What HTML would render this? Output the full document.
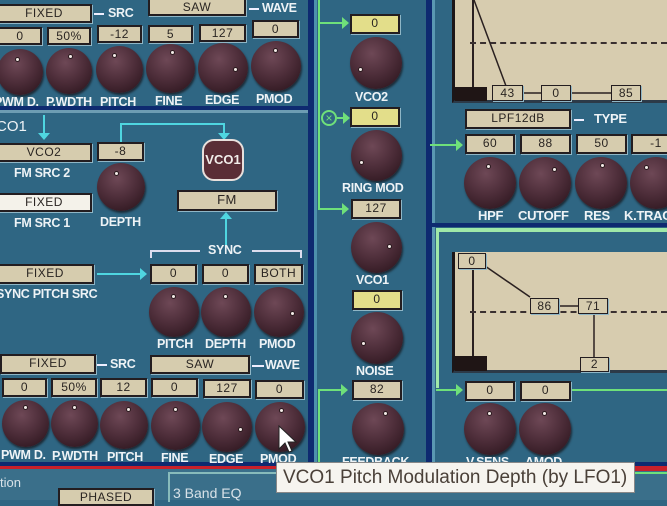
<!DOCTYPE html>
<html><head><meta charset="utf-8"><style>
*{margin:0;padding:0;box-sizing:border-box}
body{width:667px;height:500px;overflow:hidden;background:#2f6683;position:relative;font-family:"Liberation Sans",sans-serif}
div{position:absolute}
.b{background:#d6ccae;border:2px solid #231d20;box-shadow:1px 1px 0 #8fb6c6;color:#2a2522;font-size:12px;text-align:center;line-height:15px;letter-spacing:0.5px}
.y{background:#e3de8a}
.w{background:#f4f2ea}
.k{border-radius:50%;background:radial-gradient(circle at 42% 32%,#6e4856 0%,#4e2e3a 45%,#341b24 80%,#22121a 100%);box-shadow:1px 2px 2px #1c2a35}
.d{width:5px;height:5px;border-radius:50%;background:#f4ece8;border:1px solid #2a1a1e}
.l{color:#eef3f6;font-weight:bold;font-size:12.5px;white-space:nowrap;text-align:center;letter-spacing:-0.3px}
.g{background:#6fe07a}
.c{background:#4fd6e0}
.n{background:#0e2a70}
</style></head><body>
<div class="n" style="left:0;top:106px;width:314px;height:4px"></div>
<div style="left:0;top:110px;width:310px;height:3px;background:#6d9db3"></div>
<div class="n" style="left:308px;top:0;width:6px;height:466px"></div>
<div style="left:314px;top:0;width:3px;height:466px;background:#4d90ac"></div>
<div class="n" style="left:426px;top:0;width:6px;height:500px"></div>
<div style="left:432px;top:0;width:3px;height:500px;background:#5a98b2"></div>
<div class="n" style="left:0;top:462px;width:667px;height:4px"></div>
<div style="left:0;top:466px;width:667px;height:3px;background:#c8202a"></div>
<div style="left:0;top:469px;width:667px;height:31px;background:#3a6f8a"></div>

<div class="b" style="left:-4px;top:4px;width:96px;height:19px">FIXED</div>
<div style="left:94px;top:13px;width:10px;height:2px;background:#eef"></div>
<div class="l" style="left:108px;top:6px">SRC</div>
<div class="b" style="left:148px;top:-2px;width:98px;height:18px">SAW</div>
<div style="left:249px;top:8px;width:10px;height:2px;background:#eef"></div>
<div class="l" style="left:262px;top:1px">WAVE</div>
<div class="b" style="left:-2px;top:27px;width:44px;height:18px">0</div>
<div class="b" style="left:47px;top:27px;width:44px;height:18px">50%</div>
<div class="b" style="left:97px;top:25px;width:45px;height:18px">-12</div>
<div class="b" style="left:148px;top:25px;width:45px;height:18px">5</div>
<div class="b" style="left:199px;top:24px;width:47px;height:18px">127</div>
<div class="b" style="left:252px;top:20px;width:47px;height:18px">0</div>
<div class="k" style="left:-3px;top:49px;width:46px;height:46px"><div class="d" style="left:18px;top:8px"></div></div>
<div class="k" style="left:46px;top:48px;width:46px;height:46px"><div class="d" style="left:22px;top:6px"></div></div>
<div class="k" style="left:96px;top:46px;width:47px;height:47px"><div class="d" style="left:16px;top:7px"></div></div>
<div class="k" style="left:146px;top:44px;width:49px;height:49px"><div class="d" style="left:24px;top:6px"></div></div>
<div class="k" style="left:198px;top:43px;width:50px;height:50px"><div class="d" style="left:35px;top:24px"></div></div>
<div class="k" style="left:251px;top:41px;width:50px;height:50px"><div class="d" style="left:22px;top:7px"></div></div>
<div class="l" style="left:-6px;top:95px">PWM D.</div>
<div class="l" style="left:46px;top:95px">P.WDTH</div>
<div class="l" style="left:100px;top:95px">PITCH</div>
<div class="l" style="left:155px;top:94px">FINE</div>
<div class="l" style="left:205px;top:93px">EDGE</div>
<div class="l" style="left:256px;top:92px">PMOD</div>

<div style="left:-4px;top:118px;color:#eef3f6;font-size:15px">CO1</div>
<div class="c" style="left:43px;top:115px;width:2px;height:20px"></div>
<div style="left:38px;top:133px;border-left:6px solid transparent;border-right:6px solid transparent;border-top:7px solid #4fd6e0"></div>
<div class="b" style="left:-4px;top:143px;width:96px;height:19px">VCO2</div>
<div class="l" style="left:14px;top:166px">FM SRC 2</div>
<div class="b w" style="left:-4px;top:193px;width:96px;height:19px">FIXED</div>
<div class="l" style="left:14px;top:216px">FM SRC 1</div>
<div class="b" style="left:97px;top:142px;width:47px;height:19px">-8</div>
<div class="c" style="left:120px;top:123px;width:2px;height:19px"></div>
<div class="c" style="left:120px;top:123px;width:104px;height:2px"></div>
<div class="c" style="left:223px;top:123px;width:2px;height:12px"></div>
<div style="left:218px;top:133px;border-left:6px solid transparent;border-right:6px solid transparent;border-top:7px solid #4fd6e0"></div>
<div class="k" style="left:97px;top:163px;width:48px;height:48px"><div class="d" style="left:17px;top:8px"></div></div>
<div class="l" style="left:100px;top:215px">DEPTH</div>
<div style="left:202px;top:139px;width:42px;height:42px;border-radius:12px;background:#5a2e36;border:2px solid #e8e0dc;color:#f2eeea;font-weight:bold;font-size:13px;text-align:center;line-height:38px">VCO1</div>
<div class="b" style="left:177px;top:190px;width:100px;height:21px;font-size:13px">FM</div>
<div class="c" style="left:225px;top:217px;width:2px;height:28px"></div>
<div style="left:220px;top:212px;border-left:6px solid transparent;border-right:6px solid transparent;border-bottom:7px solid #4fd6e0"></div>
<div class="l" style="left:208px;top:243px">SYNC</div>
<div style="left:150px;top:250px;width:50px;height:8px;border-top:2px solid #dde;border-left:2px solid #dde"></div>
<div style="left:252px;top:250px;width:50px;height:8px;border-top:2px solid #dde;border-right:2px solid #dde"></div>
<div class="b" style="left:-4px;top:264px;width:98px;height:20px">FIXED</div>
<div class="c" style="left:97px;top:273px;width:45px;height:2px"></div>
<div style="left:140px;top:268px;border-top:6px solid transparent;border-bottom:6px solid transparent;border-left:7px solid #4fd6e0"></div>
<div class="l" style="left:-4px;top:287px">SYNC PITCH SRC</div>
<div class="b" style="left:150px;top:264px;width:47px;height:20px">0</div>
<div class="b" style="left:202px;top:264px;width:47px;height:20px">0</div>
<div class="b" style="left:254px;top:264px;width:49px;height:20px">BOTH</div>
<div class="k" style="left:149px;top:287px;width:50px;height:50px"><div class="d" style="left:22px;top:7px"></div></div>
<div class="k" style="left:201px;top:287px;width:50px;height:50px"><div class="d" style="left:22px;top:7px"></div></div>
<div class="k" style="left:254px;top:287px;width:50px;height:50px"><div class="d" style="left:36px;top:24px"></div></div>
<div class="l" style="left:157px;top:337px">PITCH</div>
<div class="l" style="left:205px;top:337px">DEPTH</div>
<div class="l" style="left:259px;top:337px">PMOD</div>

<div class="b" style="left:0;top:354px;width:96px;height:20px">FIXED</div>
<div style="left:97px;top:364px;width:10px;height:2px;background:#eef"></div>
<div class="l" style="left:110px;top:357px">SRC</div>
<div class="b" style="left:150px;top:355px;width:100px;height:19px">SAW</div>
<div style="left:252px;top:365px;width:12px;height:2px;background:#eef"></div>
<div class="l" style="left:265px;top:358px">WAVE</div>
<div class="b" style="left:2px;top:378px;width:45px;height:19px">0</div>
<div class="b" style="left:51px;top:378px;width:46px;height:19px">50%</div>
<div class="b" style="left:100px;top:378px;width:47px;height:19px">12</div>
<div class="b" style="left:151px;top:378px;width:47px;height:19px">0</div>
<div class="b" style="left:203px;top:379px;width:48px;height:19px">127</div>
<div class="b" style="left:255px;top:380px;width:49px;height:19px">0</div>
<div class="k" style="left:2px;top:400px;width:47px;height:47px"><div class="d" style="left:21px;top:5px"></div></div>
<div class="k" style="left:51px;top:400px;width:47px;height:47px"><div class="d" style="left:21px;top:5px"></div></div>
<div class="k" style="left:100px;top:401px;width:48px;height:48px"><div class="d" style="left:26px;top:6px"></div></div>
<div class="k" style="left:151px;top:401px;width:49px;height:49px"><div class="d" style="left:22px;top:6px"></div></div>
<div class="k" style="left:202px;top:402px;width:50px;height:50px"><div class="d" style="left:36px;top:25px"></div></div>
<div class="k" style="left:255px;top:402px;width:50px;height:50px"><div class="d" style="left:24px;top:6px"></div></div>
<div class="l" style="left:1px;top:448px">PWM D.</div>
<div class="l" style="left:52px;top:449px">P.WDTH</div>
<div class="l" style="left:107px;top:450px">PITCH</div>
<div class="l" style="left:161px;top:451px">FINE</div>
<div class="l" style="left:209px;top:452px">EDGE</div>
<div class="l" style="left:260px;top:452px">PMOD</div>
<div style="left:0;top:475px;color:#d8e2e8;font-size:13px">tion</div>
<div class="b" style="left:58px;top:488px;width:96px;height:18px">PHASED</div>
<div style="left:168px;top:472px;width:260px;height:30px;border-left:2px solid #8bb;border-top:2px solid #8bb"></div>
<div style="left:173px;top:485px;color:#d8e2e8;font-size:14px">3 Band EQ</div>

<div class="g" style="left:318px;top:0;width:2px;height:210px"></div>
<div class="g" style="left:318px;top:22px;width:26px;height:2px"></div>
<div style="left:342px;top:17px;border-top:6px solid transparent;border-bottom:6px solid transparent;border-left:7px solid #6fe07a"></div>
<div class="b y" style="left:350px;top:14px;width:50px;height:20px">0</div>
<div class="k" style="left:350px;top:37px;width:52px;height:52px"><div class="d" style="left:8px;top:30px"></div></div>
<div class="l" style="left:355px;top:90px">VCO2</div>
<div style="left:321px;top:110px;width:16px;height:16px;border-radius:50%;border:2px solid #6fe07a;color:#6fe07a;font-size:12px;line-height:12px;text-align:center">×</div>
<div class="g" style="left:337px;top:117px;width:8px;height:2px"></div>
<div style="left:343px;top:112px;border-top:6px solid transparent;border-bottom:6px solid transparent;border-left:7px solid #6fe07a"></div>
<div class="b y" style="left:350px;top:107px;width:50px;height:20px">0</div>
<div class="k" style="left:351px;top:130px;width:51px;height:51px"><div class="d" style="left:8px;top:30px"></div></div>
<div class="l" style="left:342px;top:181px">RING MOD</div>
<div class="g" style="left:318px;top:208px;width:26px;height:2px"></div>
<div style="left:342px;top:203px;border-top:6px solid transparent;border-bottom:6px solid transparent;border-left:7px solid #6fe07a"></div>
<div class="b" style="left:351px;top:199px;width:50px;height:20px">127</div>
<div class="k" style="left:351px;top:222px;width:51px;height:51px"><div class="d" style="left:36px;top:22px"></div></div>
<div class="l" style="left:356px;top:273px">VCO1</div>
<div class="b y" style="left:352px;top:290px;width:50px;height:20px">0</div>
<div class="k" style="left:351px;top:312px;width:52px;height:52px"><div class="d" style="left:10px;top:29px"></div></div>
<div class="l" style="left:356px;top:364px">NOISE</div>
<div class="g" style="left:318px;top:389px;width:24px;height:2px"></div>
<div class="g" style="left:318px;top:389px;width:2px;height:76px"></div>
<div style="left:341px;top:384px;border-top:6px solid transparent;border-bottom:6px solid transparent;border-left:7px solid #6fe07a"></div>
<div class="b" style="left:352px;top:380px;width:50px;height:20px">82</div>
<div class="k" style="left:352px;top:403px;width:52px;height:52px"><div class="d" style="left:31px;top:8px"></div></div>
<div class="l" style="left:342px;top:455px">FEEDBACK</div>

<div style="left:452px;top:0;width:215px;height:103px;background:#d7ccaf;border-left:3px solid #1c1618;border-bottom:3px solid #2c3a48"></div>
<div style="left:472px;top:0;width:2px;height:88px;background:#2a2020"></div>
<div style="left:470px;top:42px;width:197px;border-top:2px dashed #3a3030"></div>
<svg style="position:absolute;left:0;top:0" width="667" height="500"><line x1="474" y1="0" x2="506" y2="86" stroke="#2a2020" stroke-width="1.5"/><line x1="522" y1="93" x2="612" y2="93" stroke="#2a2020" stroke-width="1.5"/></svg>
<div style="left:455px;top:87px;width:32px;height:14px;background:#1f1515"></div>
<div class="b" style="left:492px;top:85px;width:31px;height:16px;border-width:1px;line-height:14px">43</div>
<div class="b" style="left:541px;top:85px;width:30px;height:16px;border-width:1px;line-height:14px">0</div>
<div class="b" style="left:611px;top:85px;width:30px;height:16px;border-width:1px;line-height:14px">85</div>
<div class="b" style="left:465px;top:109px;width:106px;height:20px">LPF12dB</div>
<div style="left:574px;top:119px;width:10px;height:2px;background:#eef"></div>
<div class="l" style="left:594px;top:111px;font-size:13px">TYPE</div>
<div class="g" style="left:430px;top:144px;width:28px;height:2px"></div>
<div style="left:456px;top:139px;border-top:6px solid transparent;border-bottom:6px solid transparent;border-left:7px solid #6fe07a"></div>
<div class="b" style="left:465px;top:134px;width:50px;height:20px">60</div>
<div class="b" style="left:520px;top:134px;width:51px;height:20px">88</div>
<div class="b" style="left:576px;top:134px;width:51px;height:20px">50</div>
<div class="b" style="left:631px;top:134px;width:50px;height:20px">-1</div>
<div class="k" style="left:464px;top:157px;width:52px;height:52px"><div class="d" style="left:22px;top:7px"></div></div>
<div class="k" style="left:519px;top:157px;width:52px;height:52px"><div class="d" style="left:33px;top:10px"></div></div>
<div class="k" style="left:575px;top:157px;width:52px;height:52px"><div class="d" style="left:25px;top:6px"></div></div>
<div class="k" style="left:630px;top:157px;width:52px;height:52px"><div class="d" style="left:14px;top:8px"></div></div>
<div class="l" style="left:478px;top:208px;font-size:13px">HPF</div>
<div class="l" style="left:518px;top:208px;font-size:13px">CUTOFF</div>
<div class="l" style="left:584px;top:208px;font-size:13px">RES</div>
<div class="l" style="left:624px;top:208px;font-size:13px">K.TRAC</div>
<div class="n" style="left:432px;top:223px;width:235px;height:4px"></div>
<div style="left:436px;top:228px;width:231px;height:4px;background:#9fe8a8"></div>
<div style="left:436px;top:228px;width:3px;height:160px;background:#9fe8a8"></div>

<div style="left:452px;top:252px;width:215px;height:121px;background:#d7ccaf;border-left:3px solid #1c1618;border-bottom:3px solid #2c3a48"></div>
<div style="left:472px;top:268px;width:2px;height:90px;background:#2a2020"></div>
<div style="left:470px;top:311px;width:197px;border-top:2px dashed #3a3030"></div>
<svg style="position:absolute;left:0;top:0" width="667" height="500"><line x1="485" y1="266" x2="530" y2="297" stroke="#2a2020" stroke-width="1.5"/><line x1="558" y1="306" x2="578" y2="306" stroke="#2a2020" stroke-width="1.5"/><line x1="594" y1="313" x2="594" y2="357" stroke="#2a2020" stroke-width="1.5"/></svg>
<div style="left:455px;top:356px;width:32px;height:15px;background:#1f1515"></div>
<div class="b" style="left:458px;top:253px;width:28px;height:16px;border-width:1px;line-height:14px">0</div>
<div class="b" style="left:530px;top:298px;width:29px;height:16px;border-width:1px;line-height:14px">86</div>
<div class="b" style="left:578px;top:298px;width:30px;height:16px;border-width:1px;line-height:14px">71</div>
<div class="b" style="left:580px;top:357px;width:29px;height:15px;border-width:1px;line-height:13px">2</div>
<div class="g" style="left:436px;top:389px;width:22px;height:2px"></div>
<div style="left:456px;top:384px;border-top:6px solid transparent;border-bottom:6px solid transparent;border-left:7px solid #6fe07a"></div>
<div class="g" style="left:570px;top:389px;width:97px;height:2px"></div>
<div class="b" style="left:465px;top:381px;width:50px;height:20px">0</div>
<div class="b" style="left:520px;top:381px;width:51px;height:20px">0</div>
<div class="k" style="left:464px;top:403px;width:52px;height:52px"><div class="d" style="left:23px;top:8px"></div></div>
<div class="k" style="left:519px;top:403px;width:52px;height:52px"><div class="d" style="left:23px;top:8px"></div></div>
<div class="l" style="left:466px;top:455px">V.SENS</div>
<div class="l" style="left:525px;top:455px">AMOD</div>
<div style="left:635px;top:468px;width:32px;height:3px;background:#c8202a"></div>
<div style="left:635px;top:472px;width:32px;height:2px;background:#6fe07a"></div>

<svg style="position:absolute;left:278px;top:425px" width="20" height="30"><path d="M1 1 L1 24 L7 18 L11 27 L14 26 L10 17 L18 17 Z" fill="#fff" stroke="#222" stroke-width="1"/></svg>
<div style="left:276px;top:462px;width:359px;height:31px;background:#f6f4ef;border:1px solid #888;color:#4a4038;font-size:19px;line-height:29px;padding-left:6px;white-space:nowrap;overflow:hidden;letter-spacing:0px">VCO1 Pitch Modulation Depth (by LFO1)</div>
</body></html>
